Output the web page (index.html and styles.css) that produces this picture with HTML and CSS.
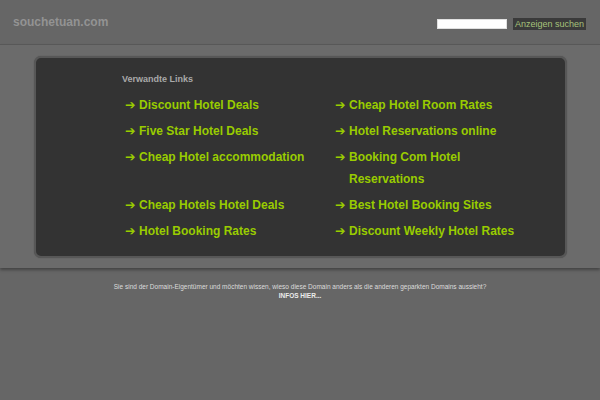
FILE: index.html
```html
<!DOCTYPE html>
<html lang="de">
<head>
<meta charset="utf-8">
<title>souchetuan.com</title>
<link rel="stylesheet" href="styles.css">
</head>
<body>
<header class="top">
  <div class="domain">souchetuan.com</div>
  <form class="search">
    <input class="search-input" type="text">
    <button class="search-btn" type="button">Anzeigen suchen</button>
  </form>
</header>
<section class="band">
  <div class="box">
    <div class="inner">
      <div class="heading">Verwandte Links</div>
      <ul class="links">
        <li><span class="arr">➔</span><a href="#">Discount Hotel Deals</a></li>
        <li><span class="arr">➔</span><a href="#">Cheap Hotel Room Rates</a></li>
        <li><span class="arr">➔</span><a href="#">Five Star Hotel Deals</a></li>
        <li><span class="arr">➔</span><a href="#">Hotel Reservations online</a></li>
        <li><span class="arr">➔</span><a href="#">Cheap Hotel accommodation</a></li>
        <li><span class="arr">➔</span><a href="#">Booking Com Hotel Reservations</a></li>
        <li><span class="arr">➔</span><a href="#">Cheap Hotels Hotel Deals</a></li>
        <li><span class="arr">➔</span><a href="#">Best Hotel Booking Sites</a></li>
        <li><span class="arr">➔</span><a href="#">Hotel Booking Rates</a></li>
        <li><span class="arr">➔</span><a href="#">Discount Weekly Hotel Rates</a></li>
      </ul>
    </div>
  </div>
</section>
<footer class="foot">
  <p class="foot-q">Sie sind der Domain-Eigentümer und möchten wissen, wieso diese Domain anders als die anderen geparkten Domains aussieht?</p>
  <p class="foot-link">INFOS HIER...</p>
</footer>
</body>
</html>
```

FILE: styles.css
```css
html, body {
  margin: 0;
  padding: 0;
  background: #666666;
  font-family: "Liberation Sans", Arial, sans-serif;
}

.top {
  height: 45px;
  border-bottom: 1px solid #5a5a5a;
  display: flex;
  align-items: center;
  justify-content: space-between;
  padding: 0 14px 0 13px;
  box-sizing: border-box;
}

.domain {
  font-size: 12px;
  font-weight: bold;
  color: #939393;
}

.search {
  display: flex;
  align-items: center;
  gap: 6px;
  margin: 3px 0 0 0;
}

.search-input {
  width: 70px;
  height: 10px;
  border: 0;
  padding: 0;
  margin: 0;
  background: #ffffff;
  box-shadow: inset 0 0 0 1px #e0e0e0;
}

.search-btn {
  font-family: "Liberation Sans", Arial, sans-serif;
  font-size: 9px;
  color: #a6c27a;
  background: #3a3a3a;
  border: 0;
  padding: 0 2px;
  height: 12px;
  line-height: 12px;
  white-space: nowrap;
  margin: 0;
}

.band {
  background: #6b6b6b;
  padding: 11px 0 10px 0;
  box-shadow: 0 2px 3px rgba(0, 0, 0, 0.35);
  position: relative;
}

.box {
  margin: 0 33px 0 34px;
  background: #333333;
  border: 2px solid #575757;
  border-radius: 7px;
  box-shadow: 0 0 1px #4a4a4a;
  padding: 14px 0 12px 0;
}

.inner {
  width: 420px;
  margin-left: 86px;
}

.heading {
  font-size: 9px;
  font-weight: bold;
  color: #a9a9a9;
  line-height: 14px;
}

.links {
  list-style: none;
  margin: 6px 0 0 0;
  padding: 0;
  display: grid;
  grid-template-columns: 210px 210px;
}

.links li {
  display: flex;
  align-items: flex-start;
  padding: 2px 20px 2px 3px;
  font-size: 12px;
  font-weight: bold;
  line-height: 22px;
}

.arr {
  font-family: "DejaVu Sans", sans-serif;
  font-size: 12.5px;
  color: #99cc00;
  width: 14px;
  flex: none;
}

.links a {
  color: #99cc00;
  text-decoration: none;
}

.foot {
  text-align: center;
  padding-top: 14px;
}

.foot p {
  margin: 0;
  font-size: 6.5px;
  line-height: 9px;
  color: #dcdcdc;
}

.foot .foot-link {
  font-weight: bold;
  color: #ececec;
}
```
